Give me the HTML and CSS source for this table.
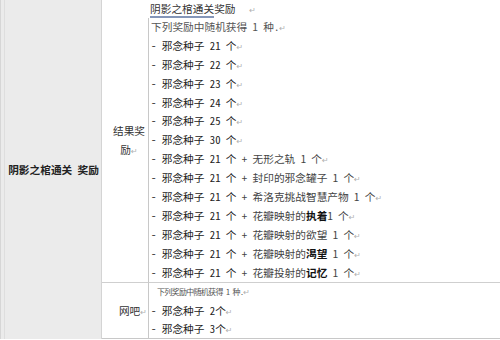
FILE: index.html
```html
<!DOCTYPE html>
<html lang="zh-CN">

<head>
    <meta charset="UTF-8">
    <meta name="viewport" content="width=device-width, initial-scale=1.0">
    <title>阴影之棺通关奖励</title>
    <link rel="stylesheet" href="styles.css">
</head>

<body>

    <div class="sheet">
        <div class="head">阴影之棺通关 奖励</div>

        <div class="kind kind-main"><span>结果奖励<span class="pm">↵</span></span></div>
        <div class="items">
            <div class="title"><span class="mark">阴影之棺通关</span>奖励  <span class="pm">↵</span></div>
            <div class="list">
                <div class="line note">下列奖励中随机获得 1 种.<span class="pm">↵</span></div>
                <div class="line">- 邪念种子 21 个<span class="pm">↵</span></div>
                <div class="line">- 邪念种子 22 个<span class="pm">↵</span></div>
                <div class="line">- 邪念种子 23 个<span class="pm">↵</span></div>
                <div class="line">- 邪念种子 24 个<span class="pm">↵</span></div>
                <div class="line">- 邪念种子 25 个<span class="pm">↵</span></div>
                <div class="line">- 邪念种子 30 个<span class="pm">↵</span></div>
                <div class="line">- 邪念种子 21 个 <span class="extra">+ 无形之轨 1 个</span><span class="pm">↵</span></div>
                <div class="line">- 邪念种子 21 个 <span class="extra">+ 封印的邪念罐子 1 个</span><span class="pm">↵</span></div>
                <div class="line">- 邪念种子 21 个 <span class="extra">+ 希洛克挑战智慧产物 1 个</span><span class="pm">↵</span></div>
                <div class="line">- 邪念种子 21 个 <span class="extra">+ 花瓣映射的<b>执着</b>1 个</span><span class="pm">↵</span></div>
                <div class="line">- 邪念种子 21 个 <span class="extra">+ 花瓣映射的欲望 1 个</span><span class="pm">↵</span></div>
                <div class="line">- 邪念种子 21 个 <span class="extra">+ 花瓣映射的<b>渴望</b> 1 个</span><span class="pm">↵</span></div>
                <div class="line">- 邪念种子 21 个 <span class="extra">+ 花瓣投射的<b>记忆</b> 1 个</span><span class="pm">↵</span></div>
            </div>
        </div>

        <div class="kind kind-net"><span>网吧<span class="pm">↵</span></span></div>
        <div class="items items-net">
            <div class="line note small">下列奖励中随机获得 1 种.<span class="pm">↵</span></div>
            <div class="line">- 邪念种子 2个<span class="pm">↵</span></div>
            <div class="line">- 邪念种子 3个<span class="pm">↵</span></div>
        </div>
    </div>

</body>

</html>
```

FILE: styles.css
```css
* {
    margin: 0;
    padding: 0;
    box-sizing: border-box;
}

body {
    background-color: #fff;
    font-family: "Noto Sans Mono CJK SC", "Noto Sans CJK SC", sans-serif;
    font-size: 10.7px;
    color: #222;
}

.sheet {
    width: 500px;
    height: 339px;
    display: grid;
    grid-template-columns: 102px 46px 1fr;
    grid-template-rows: 282px 57px;
    border-bottom: 1px solid #c8c8c8;
}

.head {
    grid-row: 1 / 3;
    display: flex;
    align-items: center;
    justify-content: flex-end;
    padding-right: 2px;
    background-color: #ebebeb;
    border-right: 1px solid #d4d4d4;
    box-shadow: inset 1px 0 #d6d6d6, inset 4px 0 #ebebeb, inset 5px 0 #dedede;
    font-weight: bold;
    color: #222;
    white-space: pre;
}

.kind {
    display: flex;
    align-items: center;
    color: #333;
    line-height: 18.9px;
}

.kind-main {
    justify-content: center;
    text-align: center;
    padding-left: 8px;
}

.kind-net {
    justify-content: flex-end;
    padding-right: 1px;
    border-top: 1px solid #cfcfcf;
}

.items {
    line-height: 18.9px;
    overflow: hidden;
}

.title,
.line {
    white-space: pre;
}

.line {
    height: 18.9px;
}

.title {
    height: 18px;
    line-height: 17px;
    padding-left: 2px;
    color: #333;
}

.title .mark {
    border-bottom: 2px solid #8496b8;
}

.title .pm {
    padding-left: 3px;
}

.list {
    border-left: 1px solid #c8c8c8;
    padding-left: 2px;
}

.items-net {
    border-left: 1px solid #c8c8c8;
    border-top: 1px solid #cfcfcf;
    padding-left: 2px;
}

.note {
    color: #555;
}

/* the net-cafe note is set smaller and condensed */
.small {
    height: 18.5px;
    line-height: 18.5px;
    font-size: 8px;
    letter-spacing: -0.7px;
    padding-left: 6px;
}

.extra {
    color: #444;
}

.extra b {
    color: #111;
}

.pm {
    font-family: "DejaVu Sans", sans-serif;
    font-size: 8px;
    line-height: 1;
    letter-spacing: 0;
    color: #b0b0b0;
}
```
